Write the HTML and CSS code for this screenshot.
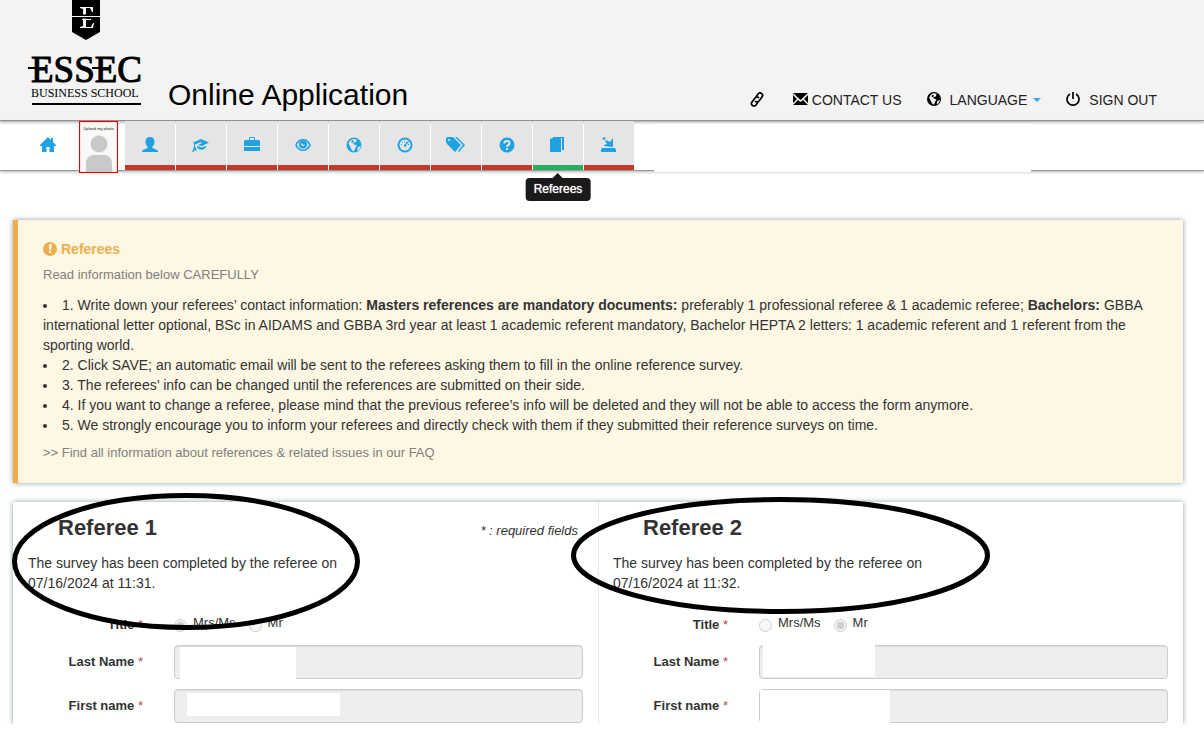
FILE: index.html
```html
<!DOCTYPE html>
<html lang="en">
<head>
	<meta charset="UTF-8">
	<title>Online Application</title>
	<link rel="stylesheet" href="styles.css">
</head>
<body>
	<header class="header">
		<svg class="logo" width="114" height="106" viewBox="0 0 114 106" role="img" aria-label="ESSEC Business School">
			<path d="M44 0h28v32l-14 8-14-8z"/>
			<path d="M52 7h13v5h-1l-2-4h-4v19h5l2-4h1l-1 5H52v-1l3-1V9l-3-1z" fill="#f3f3f3"/>
			<path d="M44 16.500h28" stroke="#000" stroke-width="4"/>
			<path d="M44 16.500h28M54 19.500h9" stroke="#f3f3f3"/>
			<text x="3" y="82" class="logo-name">ESSEC</text>
			<path d="M0 67h18v2H0zM64 67h18v2H64z"/>
			<text x="3" y="97" class="logo-sub">BUSINESS SCHOOL</text>
			<path d="M4 103h109v2H4z"/>
		</svg>
		<h1 class="site-title">Online Application</h1>
		<ul class="user-menu">
			<li><a href="#" aria-label="Link"><svg width="14" height="15" viewBox="0 0 14 15"><g fill="none" stroke="currentColor" stroke-width="1.700"><path d="M6 5l2-3a2.500 2.500 0 0 1 4 3L9 9a2.500 2.500 0 0 1-4 0"/><path d="M8 10l-2 3a2.500 2.500 0 0 1-4-3l3-4a2.500 2.500 0 0 1 4 0"/></g></svg></a></li>
			<li><a href="#"><svg width="15" height="14" viewBox="0 0 15 14"><path d="M0 1h15L7.500 8zM0 3l4 4-4 4zM15 3l-4 4 4 4zM0 13l5-5 2.500 2L10 8l5 5z"/></svg><span class="near">CONTACT US</span></a></li>
			<li><a href="#"><svg width="14" height="14" viewBox="0 0 16 16"><circle cx="8" cy="8" r="8"/><path d="M7 1.500l4 .5-1 3-3 1 1 1.500 3 1-2 3-1 3-2-1-2-4-1.500-3L4 3.500z" fill="#f3f3f3"/><path d="M6 3l2 1-1 2-2-1z"/><path d="M12 10l3-1-2 4-2 1z" fill="#f3f3f3"/></svg><span>LANGUAGE</span><i class="caret"></i></a></li>
			<li><a href="#"><svg width="14" height="14" viewBox="0 0 14 14"><path d="M4 2a6 6 0 1 0 6 0M7 0v7" fill="none" stroke="currentColor" stroke-width="1.700"/></svg><span>SIGN OUT</span></a></li>
		</ul>
	</header>

	<nav class="steps">
		<a class="home" href="#" aria-label="Home"><svg width="16" height="15" viewBox="0 0 16 15"><path d="M8 0l3 3V1h2v4l3 3v1h-2v6H9.500v-5h-3v5H2V9H0V8z"/></svg></a>
		<a class="photo" href="#">
			<span class="photo-text">Upload my photo</span>
			<svg width="26" height="37" viewBox="0 0 26 37"><circle cx="13" cy="9" r="8.500"/><path d="M0 37v-9a8 8 0 0 1 8-8h10a8 8 0 0 1 8 8v9z"/></svg>
		</a>
		<ul class="tabs">
			<li><a href="#" aria-label="Profile"><svg width="16" height="15" viewBox="0 0 16 15"><path d="M8 0c3 0 4.500 2 4.500 4.500 0 2-1 4-2 5V11l4.500 2 1 1v1H0v-1l1-1 4.500-2V9.500c-1-1-2-3-2-5C3.500 2 5 0 8 0z"/></svg></a></li>
			<li><a href="#" aria-label="Education"><svg width="17" height="14" viewBox="0 0 17 14"><path d="M9 1l8 3.500L10 8 6 7l4-2-1-1-6 2.500v2L4 10l1 3-2-1-2 2H0l2-5V5.500L1 4.500z"/><path d="M5 8l5 1.500L14 8v1.500c-3 3-6 3-9 0z"/></svg></a></li>
			<li><a href="#" aria-label="Experience"><svg width="16" height="15" viewBox="0 0 16 15"><path fill-rule="evenodd" d="M5 3V1l1-1h4l1 1v2h4l1 1v5H0V4l1-1zm1 0h4V1H6z"/><path d="M0 10h16v4H0z"/></svg></a></li>
			<li><a href="#" aria-label="Overview"><svg width="16" height="14" viewBox="0 0 16 14"><path d="M1 7c3-7 11-7 14 0-3 7-11 7-14 0z" fill="none" stroke="currentColor" stroke-width="1.700"/><circle cx="8" cy="6.500" r="4"/><path d="M6 6l1-1 1 2 2-1-1 2H7z" fill="#e5e5e5"/></svg></a></li>
			<li><a href="#" aria-label="International"><svg width="16" height="16" viewBox="0 0 16 16"><circle cx="8" cy="8" r="7.500"/><path d="M7 2l4 .5-1 2.500-3 1 1 1.500 3 1-2 3-1 3-2-1-2-4-1.500-3L4 3.500z" fill="#e5e5e5"/><path d="M6 3l2 1-1 2-2-1z"/><path d="M12 10l3-1-2 4-2 1z" fill="#e5e5e5"/></svg></a></li>
			<li><a href="#" aria-label="Tests"><svg width="16" height="16" viewBox="0 0 16 16"><circle cx="8" cy="8" r="6.500" fill="none" stroke="currentColor" stroke-width="2"/><path d="M4 7h1v1H4zM5 5h1v1H5zM7 4h1v1H7zM9 5h1v1H9zM12 7h-1v1h1zM11 4l1 1-3 3 1 1-2 1-1-1V8z"/></svg></a></li>
			<li><a href="#" aria-label="Programs"><svg width="20" height="15" viewBox="0 0 20 15"><path fill-rule="evenodd" d="M1 0h6l8 8-6 7-8-8-1-2V1zm2 2a1 1 0 1 0 0 2 1 1 0 0 0 0-2z"/><path d="M9 0h2l8 8-6 7-1-1 5-6z"/></svg></a></li>
			<li><a href="#" aria-label="Questions"><svg width="16" height="16" viewBox="0 0 16 16"><circle cx="8" cy="8" r="7.500"/><path d="M5.500 6.500C5 3 11 3 10.500 6.500 10.500 8 8 8 8 10M8 11v2" fill="none" stroke="#e5e5e5" stroke-width="2"/></svg></a></li>
			<li class="active"><a href="#" aria-label="Referees"><svg width="15" height="16" viewBox="0 0 15 16"><path d="M0 2l2-1h9v14H0z"/><path d="M3 0h11v13h-2V1H3z"/></svg></a><span class="tooltip">Referees</span></li>
			<li><a href="#" aria-label="Submit"><svg width="16" height="16" viewBox="0 0 16 16"><path d="M1 11h13l1 2v2H0v-2z"/><path d="M3 9V8l3-1-2-3 1-1 4 2 3-4v9zM1 2l2-2 2 1-2 2z"/></svg></a></li>
		</ul>
		<div class="blank"></div>
	</nav>

	<main class="content">
		<section class="notice">
			<h2 class="notice-title"><svg width="14" height="14" viewBox="0 0 14 14"><circle cx="7" cy="7" r="7"/><path d="M6 2h3l-1 6H6zM6 9h2v2H6z" fill="#fdf7e3"/></svg>Referees</h2>
			<p class="hint">Read information below CAREFULLY</p>
			<ul class="rules">
				<li>1. Write down your referees’ contact information: <b>Masters references are mandatory documents:</b> preferably 1 professional referee &amp; 1 academic referee; <b>Bachelors:</b> GBBA international letter optional, BSc in AIDAMS and GBBA 3rd year at least 1 academic referent mandatory, Bachelor HEPTA 2 letters: 1 academic referent and 1 referent from the sporting world.</li>
				<li>2. Click SAVE; an automatic email will be sent to the referees asking them to fill in the online reference survey.</li>
				<li>3. The referees’ info can be changed until the references are submitted on their side.</li>
				<li>4. If you want to change a referee, please mind that the previous referee’s info will be deleted and they will not be able to access the form anymore.</li>
				<li>5. We strongly encourage you to inform your referees and directly check with them if they submitted their reference surveys on time.</li>
			</ul>
			<p class="hint">&gt;&gt; Find all information about references &amp; related issues in our FAQ</p>
		</section>

		<form class="referees">
			<section class="referee">
				<div class="referee-head">
					<h2>Referee 1</h2>
					<em>* : required fields</em>
				</div>
				<p class="status">The survey has been completed by the referee on 07/16/2024 at 11:31.</p>
				<div class="row titles">
					<span class="label">Title <i>*</i></span>
					<div class="radios">
						<label><input type="radio" name="title1" checked disabled>Mrs/Ms</label>
						<label><input type="radio" name="title1" disabled>Mr</label>
					</div>
				</div>
				<div class="row">
					<label class="label" for="last1">Last Name <i>*</i></label>
					<div class="field"><input type="text" id="last1" disabled><span class="mask mask-a"></span></div>
				</div>
				<div class="row">
					<label class="label" for="first1">First name <i>*</i></label>
					<div class="field"><input type="text" id="first1" disabled><span class="mask mask-b"></span></div>
				</div>
				<svg class="mark mark-one" width="348" height="137" viewBox="0 0 348 137"><ellipse cx="174" cy="68.500" rx="171.500" ry="66"/></svg>
			</section>
			<section class="referee">
				<div class="referee-head">
					<h2>Referee 2</h2>
				</div>
				<p class="status">The survey has been completed by the referee on 07/16/2024 at 11:32.</p>
				<div class="row titles">
					<span class="label">Title <i>*</i></span>
					<div class="radios">
						<label><input type="radio" name="title2" disabled>Mrs/Ms</label>
						<label><input type="radio" name="title2" checked disabled>Mr</label>
					</div>
				</div>
				<div class="row">
					<label class="label" for="last2">Last Name <i>*</i></label>
					<div class="field"><input type="text" id="last2" disabled><span class="mask mask-c"></span></div>
				</div>
				<div class="row">
					<label class="label" for="first2">First name <i>*</i></label>
					<div class="field"><input type="text" id="first2" disabled><span class="mask mask-d"></span></div>
				</div>
				<svg class="mark mark-two" width="419" height="117" viewBox="0 0 419 117"><ellipse cx="209.500" cy="58.500" rx="207" ry="56"/></svg>
			</section>
		</form>
	</main>
</body>
</html>
```
FILE: styles.css
```css
*{
	box-sizing:border-box;
}

body{
	margin:0;
	background:#fff;
	color:#333;
	font-family:"Liberation Sans",Arial,sans-serif;
	font-size:14px;
	line-height:20px;
}

h1,h2,p,ul{
	margin:0;
	padding:0;
}

ul{
	list-style:none;
}

a{
	color:inherit;
	text-decoration:none;
}

svg{
	display:block;
	flex:none;
	fill:currentColor;
}

/* header */
.header{
	display:flex;
	align-items:flex-end;
	padding:0 47px 14px 28px;
	background:#f3f3f3;
	border-bottom:1px solid #999;
	box-shadow:0 1px 3px rgba(0,0,0,.4);
	color:#000;
}

.logo-name{
	font-family:"Liberation Serif",serif;
	font-size:37px;
	stroke:#000;
	stroke-width:1px;
}

.logo-sub{
	font-family:"Liberation Serif",serif;
	font-size:12px;
}

.site-title{
	margin-left:26px;
	font-size:30px;
	line-height:36px;
	font-weight:normal;
	margin-bottom:-7px;
}

.user-menu{
	display:flex;
	gap:25px;
	margin-left:auto;
	margin-bottom:-4px;
	color:#222;
}

.user-menu li:first-child{
	margin-right:4px;
}

.user-menu a{
	display:flex;
	align-items:center;
	height:20px;
}

.user-menu svg{
	color:#000;
	margin-bottom:2px;
}

.user-menu span{
	margin-left:9px;
}

.user-menu .near{
	margin-left:4px;
}

.caret{
	margin-left:6px;
	border:4px solid transparent;
	border-top-color:#38a9e4;
	border-bottom:0;
}

/* application steps */
.steps{
	display:flex;
	height:50px;
	border-bottom:1px solid #999;
	box-shadow:0 1px 3px rgba(0,0,0,.3);
	color:#1fa2e2;
}

.home{
	display:flex;
	align-items:center;
	padding:0 23px 2px 40px;
}

.photo{
	display:flex;
	flex-direction:column;
	align-items:center;
	justify-content:space-between;
	width:39px;
	height:52px;
	margin-right:7px;
	border:1px solid #e60000;
	box-shadow:inset 0 0 1px #e60000;
	background:#f8f8f8;
	color:#c9c9c9;
	z-index:1;
}

.photo-text{
	margin-top:4px;
	font-size:4px;
	line-height:6px;
	white-space:nowrap;
	color:#222;
}

.tabs{
	display:flex;
	gap:1px;
}

.tabs li{
	position:relative;
	width:50px;
	background:#e5e5e5;
	border-bottom:5px solid #c0392b;
}

.tabs .active{
	border-bottom-color:#27ae60;
}

.tabs a{
	display:flex;
	align-items:center;
	justify-content:center;
	height:100%;
	padding:3px 1px 0 0;
}

.tooltip{
	position:absolute;
	top:57px;
	left:50%;
	transform:translateX(-50%);
	padding:1px 8px 2px;
	border-radius:4px;
	background:#1a1a1a;
	color:#fff;
	font-size:12px;
	text-shadow:0 0 1px #fff;
	z-index:2;
}

.tooltip:before{
	content:"";
	position:absolute;
	top:-5px;
	left:50%;
	margin-left:-5px;
	border:5px solid transparent;
	border-top:0;
	border-bottom-color:#1a1a1a;
}

.blank{
	flex:1;
	margin:3px 173px -2px 20px;
	background:#fff;
}

/* content */
.content{
	padding:49px 21px 0 13px;
}

.notice,.referees{
	box-shadow:0 0 5px rgba(60,90,100,.6);
}

.notice{
	padding:19px 30px 20px 25px;
	border-left:5px solid #f0ad4e;
	background:#fdf7e3;
}

.notice-title{
	display:flex;
	align-items:center;
	gap:4px;
	font-size:14px;
	color:#f0ad4e;
}

.hint{
	font-size:13px;
	color:#808080;
	margin:6px 0 0;
}

.rules{
	margin:10px 0 8px;
	list-style:disc inside;
}

/* referees form */
.referees{
	display:grid;
	grid-template-columns:1fr 1fr;
	margin-top:19px;
	background:#fff;
	clip-path:inset(-10px -10px 0);
}

.referee{
	position:relative;
	padding:13px 15px 1px;
}

.referee + .referee{
	border-left:1px solid #e8eaeb;
	padding-left:14px;
}

.referee-head{
	display:flex;
	justify-content:space-between;
	align-items:flex-end;
	padding:0 5px 0 30px;
}

.referee-head h2{
	font-size:22px;
	line-height:26px;
}

.referee-head em{
	font-size:13px;
}

.status{
	width:330px;
	margin:12px 0 22px;
}

.row{
	display:flex;
	margin-bottom:10px;
}

.row:nth-last-child(2){
	margin-bottom:0;
}

.label{
	width:115px;
	margin-right:31px;
	text-align:right;
	font-size:13px;
	font-weight:bold;
	line-height:34px;
}

.titles .label{
	line-height:20px;
}

.label i{
	font-style:normal;
	font-weight:normal;
	color:#b94a48;
}

.radios{
	display:flex;
	gap:13px;
	font-size:13px;
	line-height:16px;
}

.radios label{
	display:flex;
	gap:6px;
}

.radios input{
	width:13px;
	height:13px;
	margin:4px 0 0;
}

.field{
	position:relative;
	flex:1;
}

.field input{
	display:block;
	width:100%;
	height:34px;
	padding:6px 12px;
	border:1px solid #ccc;
	border-radius:4px;
	background:#eee;
	box-shadow:inset 0 1px 1px rgba(0,0,0,.075);
}

/* hidden values */
.mask{
	position:absolute;
	background:#fff;
}

.mask-a{
	left:6px;
	top:2px;
	width:116px;
	height:32px;
}

.mask-b{
	left:13px;
	top:4px;
	width:153px;
	height:23px;
}

.mask-c{
	left:4px;
	top:0;
	width:112px;
	height:32px;
}

.mask-d{
	left:1px;
	top:1px;
	width:130px;
	height:33px;
}

/* hand drawn circles */
.mark{
	position:absolute;
	fill:none;
	stroke:#000;
	stroke-width:5px;
	z-index:3;
	pointer-events:none;
}

.mark-one{
	left:-1px;
	top:-9px;
}

.mark-two{
	left:-28px;
	top:-5px;
}
```
